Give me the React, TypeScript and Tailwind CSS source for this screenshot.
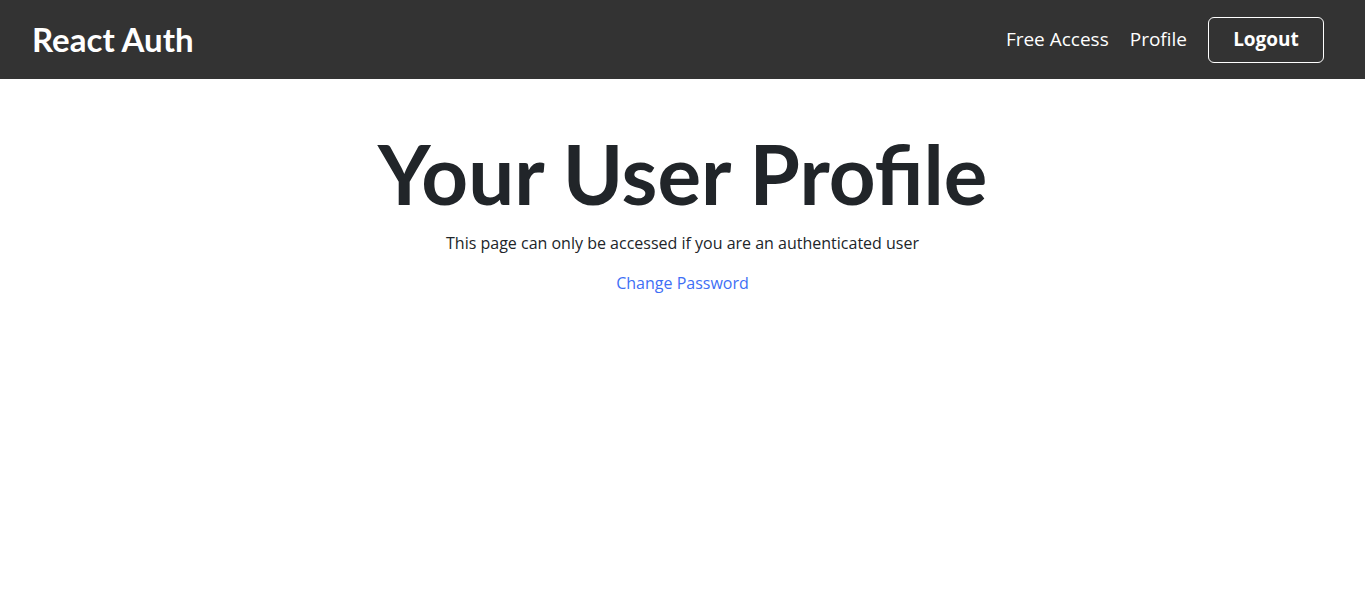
export default function App() {
  return (
    <div className="min-h-screen bg-white font-['Open_Sans',sans-serif]">
      <header className="flex h-[79px] items-center justify-between bg-[#333333] pl-8 pr-[41px]">
        <div className="font-['Lato',sans-serif] text-[33px] font-bold text-white">React Auth</div>
        <nav className="flex items-center gap-[21px] text-[19px] text-white">
          <a href="#">Free Access</a>
          <a href="#">Profile</a>
          <button className="h-[46px] w-[116px] rounded-md border border-white font-bold text-white">
            Logout
          </button>
        </nav>
      </header>
      <main className="flex flex-col items-center pt-[46px] text-[#212529]">
        <h1 className="font-['Lato',sans-serif] text-[81.6px] font-bold leading-[1.2]">Your User Profile</h1>
        <p className="mt-[8px] text-base">This page can only be accessed if you are an authenticated user</p>
        <a href="#" className="mt-[16px] text-base text-[#3f6ff5]">Change Password</a>
      </main>
    </div>
  )
}
